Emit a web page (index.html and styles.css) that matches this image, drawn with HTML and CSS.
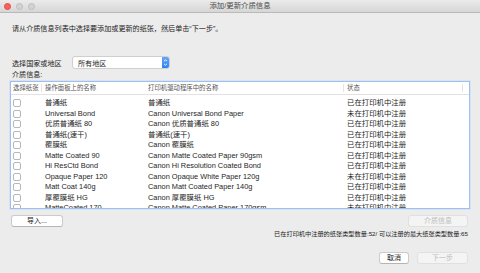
FILE: index.html
```html
<!DOCTYPE html>
<html lang="zh-CN">
<head>
    <meta charset="UTF-8">
    <title>添加/更新介质信息</title>
    <link rel="stylesheet" href="styles.css">
</head>
<body>
    <div class="window">
        <div class="titlebar">
            <div class="lights">
                <span class="light red"></span>
                <span class="light"></span>
                <span class="light"></span>
            </div>
            <div class="title">添加/更新介质信息</div>
            <div></div>
        </div>

        <div class="content">
            <p class="intro">请从介质信息列表中选择要添加或更新的纸张，然后单击“下一步”。</p>

            <div class="region">
                <label class="region-label">选择国家或地区</label>
                <div class="select">
                    <span class="select-value">所有地区</span>
                    <span class="stepper">
                        <svg width="7" height="13" viewBox="0 0 7 13">
                            <path d="M2 5.2 L3.5 3.8 L5 5.2" fill="none" stroke="#fff" stroke-width="0.9"/>
                            <path d="M2 7.8 L3.5 9.2 L5 7.8" fill="none" stroke="#fff" stroke-width="0.9"/>
                        </svg>
                    </span>
                </div>
            </div>

            <div class="section-label">介质信息:</div>

            <div class="media-table">
                <div class="row head">
                    <div class="cell">选择纸张</div>
                    <div class="cell">操作面板上的名称</div>
                    <div class="cell">打印机驱动程序中的名称</div>
                    <div class="cell">状态</div>
                    <div class="cell"></div>
                </div>
                <div class="row"><div class="cell"><span class="check"></span></div><div class="cell">普通纸</div><div class="cell">普通纸</div><div class="cell">已在打印机中注册</div></div>
                <div class="row"><div class="cell"><span class="check"></span></div><div class="cell">Universal Bond</div><div class="cell">Canon Universal Bond Paper</div><div class="cell">未在打印机中注册</div></div>
                <div class="row"><div class="cell"><span class="check"></span></div><div class="cell">优质普通纸 80</div><div class="cell">Canon 优质普通纸 80</div><div class="cell">已在打印机中注册</div></div>
                <div class="row"><div class="cell"><span class="check"></span></div><div class="cell">普通纸(速干)</div><div class="cell">普通纸(速干)</div><div class="cell">已在打印机中注册</div></div>
                <div class="row"><div class="cell"><span class="check"></span></div><div class="cell">覆膜纸</div><div class="cell">Canon 覆膜纸</div><div class="cell">已在打印机中注册</div></div>
                <div class="row"><div class="cell"><span class="check"></span></div><div class="cell">Matte Coated 90</div><div class="cell">Canon Matte Coated Paper 90gsm</div><div class="cell">已在打印机中注册</div></div>
                <div class="row"><div class="cell"><span class="check"></span></div><div class="cell">Hi ResCtd Bond</div><div class="cell">Canon Hi Resolution Coated Bond</div><div class="cell">已在打印机中注册</div></div>
                <div class="row"><div class="cell"><span class="check"></span></div><div class="cell">Opaque Paper 120</div><div class="cell">Canon Opaque White Paper 120g</div><div class="cell">未在打印机中注册</div></div>
                <div class="row"><div class="cell"><span class="check"></span></div><div class="cell">Matt Coat 140g</div><div class="cell">Canon Matt Coated Paper 140g</div><div class="cell">已在打印机中注册</div></div>
                <div class="row"><div class="cell"><span class="check"></span></div><div class="cell">厚覆膜纸 HG</div><div class="cell">Canon 厚覆膜纸 HG</div><div class="cell">已在打印机中注册</div></div>
                <div class="row"><div class="cell"><span class="check"></span></div><div class="cell">MatteCoated 170</div><div class="cell">Canon Matte Coated Paper 170gsm</div><div class="cell">未在打印机中注册</div></div>
            </div>

            <div class="table-actions">
                <button class="btn import">导入...</button>
                <button class="btn info" disabled>介质信息</button>
            </div>

            <p class="count">已在打印机中注册的纸张类型数量:52/ 可以注册的最大纸张类型数量:65</p>

            <div class="footer">
                <button class="btn cancel">取消</button>
                <button class="btn next" disabled>下一步</button>
            </div>
        </div>
    </div>
</body>
</html>
```

FILE: styles.css
```css
body {
    margin: 0;
    background: #ececec;
    font-family: "Liberation Sans", "Noto Sans CJK SC", sans-serif;
    color: #222;
}
.window {
    width: 480px;
    height: 273px;
    overflow: hidden;
    background: #ececec;
}
.titlebar {
    height: 12px;
    display: grid;
    grid-template-columns: 1fr auto 1fr;
    align-items: center;
    background: linear-gradient(#ebebeb, #d6d6d6);
    border-bottom: 1px solid #b9b9b9;
}
.lights {
    display: flex;
    gap: 5px;
    padding-left: 4px;
}
.light {
    width: 7px;
    height: 7px;
    border-radius: 50%;
    background: #d2d2d2;
    border: 0.5px solid #bdbdbd;
    box-sizing: border-box;
}
.light.red {
    background: #fc605b;
    border-color: #de4a45;
}
.title {
    font-size: 7.4px;
    line-height: 12px;
    color: #4a4a4a;
}
.content {
    padding: 0 10px 0 10px;
}
.intro {
    margin: 11px 0 0 2px;
    font-size: 7.1px;
    line-height: 10px;
}
.region {
    display: flex;
    align-items: center;
    margin-top: 22px;
    height: 13px;
}
.region-label {
    font-size: 7.1px;
    padding-left: 2px;
    width: 60px;
}
.select {
    width: 98px;
    height: 13px;
    box-sizing: border-box;
    display: flex;
    align-items: center;
    justify-content: space-between;
    background: #fff;
    border: 1px solid #cfcfcf;
    border-radius: 3px;
    overflow: hidden;
}
.select-value {
    font-size: 7.1px;
    padding-left: 5px;
}
.stepper {
    width: 7px;
    height: 13px;
    background: linear-gradient(#6aa9f9, #2a7ff3);
    display: flex;
}
.section-label {
    margin: 1px 0 0 2px;
    font-size: 7.1px;
    line-height: 11px;
}
.media-table {
    height: 128px;
    box-sizing: border-box;
    border: 1px solid #9dc0ee;
    box-shadow: 0 0 0 0.5px #c3d8f5;
    background: #fff;
    overflow: hidden;
}
.row {
    display: grid;
    grid-template-columns: 31px 103px 199px 119px 1fr;
    height: 10.5px;
    align-items: center;
    font-size: 7.4px;
    line-height: 10.5px;
    color: #1e1e1e;
}
.row .cell {
    padding-left: 3px;
    white-space: nowrap;
}
.row .cell:first-child {
    padding-left: 2px;
}
.row.head {
    height: 12px;
    margin-bottom: 3px;
    border-bottom: 1px solid #e2e2e2;
    font-size: 6.4px;
    color: #555;
}
.row.head .cell {
    border-right: 1px solid #e4e4e4;
    line-height: 8px;
}
.row.head .cell:nth-child(2),
.row.head .cell:last-child {
    border-right: none;
}
.check {
    display: block;
    width: 8px;
    height: 8px;
    box-sizing: border-box;
    border: 1px solid #b8b8b8;
    border-radius: 2px;
    background: #fff;
}
.table-actions {
    display: flex;
    justify-content: space-between;
    margin-top: 6px;
    padding-left: 1px;
}
.btn {
    font-family: "Liberation Sans", "Noto Sans CJK SC", sans-serif;
    font-size: 7px;
    height: 12px;
    padding: 0;
    background: #fff;
    color: #222;
    border: 1px solid #cbcbcb;
    border-bottom-color: #b5b5b5;
    border-radius: 3px;
    line-height: 10px;
}
.btn:disabled {
    background: #f4f4f4;
    color: #bdbdbd;
    border-color: #e0e0e0;
}
.import {
    width: 52px;
}
.info {
    width: 60px;
    margin-right: 2px;
}
.count {
    margin: 3px 2px 0 0;
    text-align: right;
    font-size: 6.2px;
    line-height: 8px;
}
.footer {
    display: flex;
    justify-content: flex-end;
    gap: 8px;
    margin-top: 14px;
    padding-right: 2px;
}
.cancel {
    width: 30px;
}
.next {
    width: 51px;
}
```
